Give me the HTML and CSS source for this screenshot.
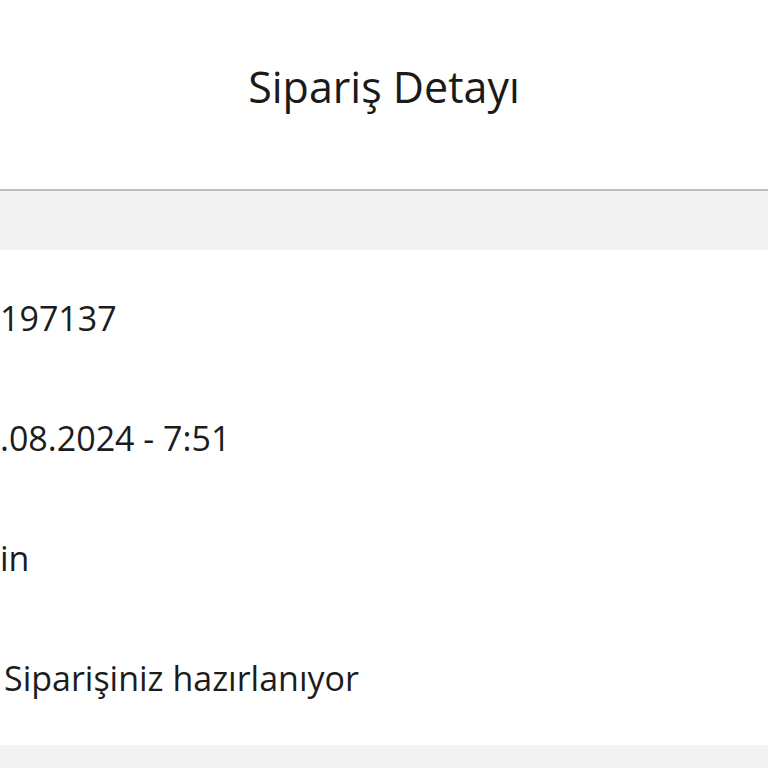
FILE: index.html
```html
<!DOCTYPE html>
<html lang="tr">
<head>
<meta charset="utf-8">
<title>Sipariş Detayı</title>
<link rel="stylesheet" href="styles.css">
</head>
<body>
<div class="page">
  <header class="header">
    <h1 class="title">Sipariş Detayı</h1>
  </header>
  <div class="band"></div>
  <section class="details">
    <div class="row">197137</div>
    <div class="row">.08.2024 - 7:51</div>
    <div class="row">in</div>
    <div class="row row-status">Siparişiniz hazırlanıyor</div>
  </section>
  <div class="band band-bottom"></div>
</div>
</body>
</html>
```
FILE: styles.css
```css
html, body {
  margin: 0;
  padding: 0;
  background: #ffffff;
}
body {
  font-family: "Open Sans", "Noto Sans", sans-serif;
  color: #1c1c1c;
  overflow: hidden;
}
.page {
  width: 768px;
  height: 768px;
  overflow: hidden;
  display: flex;
  flex-direction: column;
}
.header {
  height: 191px;
  box-sizing: border-box;
  padding-top: 62px;
  border-bottom: 2px solid #bdbdbd;
  flex: none;
}
.title {
  margin: 0;
  font-size: 43px;
  line-height: 50px;
  font-weight: 400;
  text-align: center;
  color: #1a1a1a;
}
.band {
  height: 59px;
  background: #f2f2f2;
  flex: none;
}
.details {
  display: flex;
  flex-direction: column;
  padding-bottom: 15px;
  flex: none;
}
.row {
  padding: 48px 0 32px 0;
  font-size: 34px;
  line-height: 40px;
  white-space: nowrap;
}
.row-status {
  padding-left: 4px;
}
.band-bottom {
  flex: 1;
  height: auto;
}
```
